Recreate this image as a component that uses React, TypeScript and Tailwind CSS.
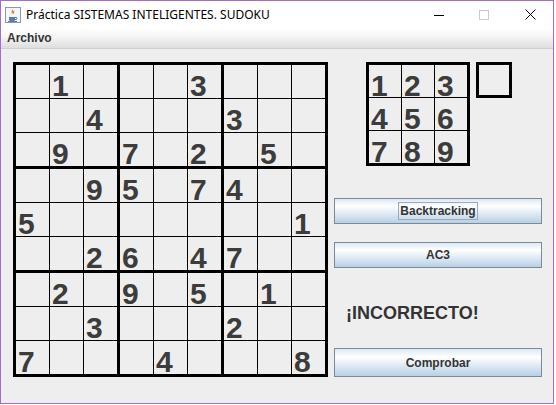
import React from 'react'

const board: string[][] = [
  ['', '1', '', '', '', '3', '', '', ''],
  ['', '', '4', '', '', '', '3', '', ''],
  ['', '9', '', '7', '', '2', '', '5', ''],
  ['', '', '9', '5', '', '7', '4', '', ''],
  ['5', '', '', '', '', '', '', '', '1'],
  ['', '', '2', '6', '', '4', '7', '', ''],
  ['', '2', '', '9', '', '5', '', '1', ''],
  ['', '', '3', '', '', '', '2', '', ''],
  ['7', '', '', '', '4', '', '', '', '8'],
]

const digitFont = { fontFamily: '"Liberation Sans", Arial, sans-serif' }

function Cell({ value, size }: { value: string; size: 'lg' | 'sm' }) {
  return (
    <div
      className={`bg-[#eeeeee] ${size === 'lg' ? 'w-[33px] h-[33px]' : 'w-[32px] h-[32px]'} pl-[2px] pt-[5px] text-[30px] leading-[32px] font-bold text-[#3c3c3c]`}
      style={digitFont}
    >
      {value}
    </div>
  )
}

function Board() {
  const blocks = [0, 1, 2, 3, 4, 5, 6, 7, 8]
  return (
    <div className="self-start border-[3px] border-black bg-black grid grid-cols-3 gap-[3px]">
      {blocks.map((b) => {
        const br = Math.floor(b / 3) * 3
        const bc = (b % 3) * 3
        return (
          <div key={b} className="grid grid-cols-3 gap-px bg-black">
            {[0, 1, 2].flatMap((r) =>
              [0, 1, 2].map((c) => (
                <Cell key={`${r}-${c}`} value={board[br + r][bc + c]} size="lg" />
              ))
            )}
          </div>
        )
      })}
    </div>
  )
}

function JButton({ label, focused, h }: { label: string; focused?: boolean; h: string }) {
  return (
    <button
      className={`w-[208px] ${h} border border-[#7a8a99] bg-[linear-gradient(to_bottom,#dde8f3_0%,#ffffff_30%,#b8cfe5_100%)] flex items-center justify-center text-[12px] font-bold text-[#333333]`}
      style={digitFont}
    >
      <span className={`px-px leading-[16px] ${focused ? 'border border-[#99aabb]' : 'border border-transparent'}`}>
        {label}
      </span>
    </button>
  )
}

function JavaIcon() {
  return (
    <svg width="16" height="16" viewBox="0 0 16 16">
      <rect x="0.5" y="0.5" width="15" height="15" fill="#f4f6f8" stroke="#8a9aaa" />
      <path d="M4 10h6v2.5a1.5 1.5 0 0 1-1.5 1.5h-3A1.5 1.5 0 0 1 4 12.5z" fill="#5a7ba6" />
      <path d="M10 10.5h1a1 1 0 0 1 0 2h-1" fill="none" stroke="#5a7ba6" />
      <path d="M7 3c1.5 1.2-1 2.2 0.5 3.5M8.5 4c1 1-0.8 1.6 0.3 2.5" fill="none" stroke="#e07020" strokeWidth="1.1" />
      <path d="M3 14.5h9" stroke="#5a7ba6" />
    </svg>
  )
}

export default function App() {
  return (
    <div className="w-[556px] h-[405px] bg-white">
      <div className="w-[554px] h-[404px] border border-[#a46bd8] flex flex-col" style={digitFont}>
        <div className="h-[27px] bg-white flex items-center shrink-0">
          <div className="ml-[4px] mt-[1px]">
            <JavaIcon />
          </div>
          <span className="ml-[5px] text-[12px] text-black" style={{ fontFamily: '"Noto Sans", "Liberation Sans", sans-serif' }}>
            Práctica SISTEMAS INTELIGENTES. SUDOKU
          </span>
          <div className="flex-1" />
          <div className="w-[10px] h-px bg-black mr-[35px] mt-[2px]" />
          <div className="w-[10px] h-[10px] border border-[#cccccc] mr-[36px]" />
          <svg width="11" height="11" viewBox="0 0 11 11" className="mr-[17px]">
            <path d="M0.5 0.5l10 10M10.5 0.5l-10 10" stroke="#000" strokeWidth="1" />
          </svg>
        </div>
        <div className="h-[21px] shrink-0 bg-[linear-gradient(to_bottom,#ffffff_0%,#f6f6f6_40%,#dedede_100%)] border-b border-[#cfcfcf] flex items-center">
          <span className="ml-[6px] text-[12px] font-bold text-[#333333]">Archivo</span>
        </div>
        <div className="flex-1 bg-[#eeeeee] flex items-start pt-[13px] pl-[12px]">
          <Board />
          <div className="ml-[6px] flex flex-col">
            <div className="flex ml-[32px]">
              <div className="border-[3px] border-black bg-black grid grid-cols-3 gap-px">
                {['1', '2', '3', '4', '5', '6', '7', '8', '9'].map((d) => (
                  <Cell key={d} value={d} size="sm" />
                ))}
              </div>
              <div className="ml-[6px] w-[36px] h-[36px] border-[3px] border-black" />
            </div>
            <div className="mt-[32px]">
              <JButton label="Backtracking" focused h="h-[26px]" />
            </div>
            <div className="mt-[18px]">
              <JButton label="AC3" h="h-[26px]" />
            </div>
            <div className="mt-[35px] ml-[12px] text-[18px] leading-[20px] font-bold text-[#333333]">
              ¡INCORRECTO!
            </div>
            <div className="mt-[25px]">
              <JButton label="Comprobar" h="h-[29px]" />
            </div>
          </div>
        </div>
      </div>
    </div>
  )
}
